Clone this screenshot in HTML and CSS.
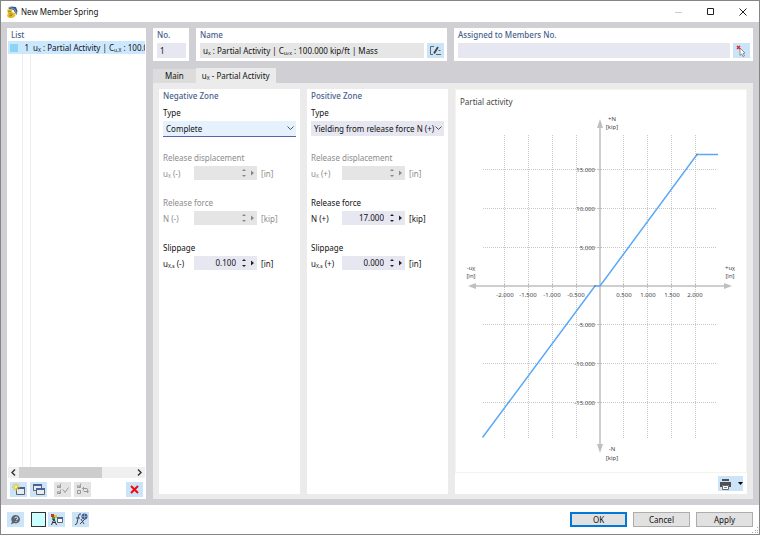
FILE: index.html
```
<!doctype html>
<html lang="en">
<head>
  <meta charset="utf-8">
  <title>New Member Spring</title>
  <link rel="stylesheet" href="styles.css">
</head>
<body>
  <div class="window">
    <header class="titlebar">
      <svg class="app-icon" width="12" height="12" viewBox="0 0 12 12">
        <path d="M2 2l3-1.500 5 .5 1.500 4-1 4-3-5-4-1z" fill="#3c5a7c"/>
        <path d="M4 1.500l5 2 1.500 4" fill="none" stroke="#7f9dbd"/>
        <path d="M1 4l3-1 2 1 0 2 3 1 .5 3-3 2H3L1 10l1-3z" fill="#e6bc2c"/>
        <path d="M2 5l3 .5M3.500 7.500l3 1M3 10l3-.5" stroke="#8f6f10" stroke-width=".8"/>
      </svg>
      <h1>New Member Spring</h1>
      <button class="win-btn" aria-label="Minimize" disabled>
        <svg width="8" height="8"><path d="M0 4.500h7" stroke="#ccc"/></svg>
      </button>
      <button class="win-btn" aria-label="Maximize">
        <svg width="8" height="8"><path d="M.5.5h6v6h-6z" fill="none" stroke="#222"/></svg>
      </button>
      <button class="win-btn" aria-label="Close">
        <svg width="8" height="8"><path d="M.5.5l7 7M7.500.5l-7 7" stroke="#222"/></svg>
      </button>
    </header>

    <main class="body">
      <section class="list-panel">
        <h2>List</h2>
        <ul class="list">
          <li class="selected">
            <span class="swatch"></span>
            <span class="num">1</span>
            <span class="item">u<sub>X</sub> : Partial Activity | C<sub>u,X</sub> : 100.000 kip/ft | Mass</span>
          </li>
        </ul>
        <div class="scrollbar">
          <button aria-label="Scroll left"><svg width="5" height="7"><path d="M4 .5l-3 3 3 3" fill="none" stroke="#333" stroke-width="1.400"/></svg></button>
          <div class="track"><div class="thumb"></div></div>
          <button aria-label="Scroll right"><svg width="5" height="7"><path d="M1 .5l3 3-3 3" fill="none" stroke="#333" stroke-width="1.400"/></svg></button>
        </div>
        <div class="list-tools">
          <button class="tool" aria-label="New">
            <svg width="13" height="13">
              <path d="M4.500 4.500h8v7h-8z" fill="#e8ebf0" stroke="#5b6373"/><path d="M4 5h9" stroke="#4a6299" stroke-width="2"/>
              <path d="M4 0v8M0 4h8M1 1l6 6M7 1L1 7" stroke="#dfc02a"/><circle cx="4" cy="4" r="1.500" fill="#fff35c"/>
            </svg>
          </button>
          <button class="tool" aria-label="Copy">
            <svg width="13" height="13">
              <path d="M1.500 1.500h8v6h-8z" fill="#e8ebf0" stroke="#5b6373"/><path d="M1 2h9" stroke="#4a6299" stroke-width="2"/>
              <path d="M4.500 5.500h8v6h-8z" fill="#e8ebf0" stroke="#5b6373"/><path d="M4 6h9" stroke="#4a6299" stroke-width="2"/>
            </svg>
          </button>
          <button class="tool gap" aria-label="Check all" disabled>
            <svg width="13" height="13" fill="none" stroke="#999">
              <path d="M1.500 2.500v2h3v-2M2 2.500l1.500 1L5 .5M1.500 8.500v2h3v-2M2 8.500l1.500 1L5 6.500M7 6.500l2 3 3.500-5"/>
            </svg>
          </button>
          <button class="tool" aria-label="Invert check" disabled>
            <svg width="13" height="13" fill="none" stroke="#999">
              <path d="M1.500 2.500v2h3v-2M2 2.500l1.500 1L5 .5M1.500 7.500h3v3h-3zM7 5.500h4l1 1.500M8 4L6.500 5.500 8 7M12 8.500H8L7 7.500M11 7l1.500 1.500L11 10"/>
            </svg>
          </button>
          <button class="tool right" aria-label="Delete">
            <svg width="9" height="9"><path d="M1 1l7 7M8 1L1 8" stroke="#f00a14" stroke-width="2"/></svg>
          </button>
        </div>
      </section>

      <div class="content">
        <div class="top-row">
          <section class="panel">
            <label for="no">No.</label>
            <div class="field-row"><input class="box" id="no" type="text" value="1"></div>
          </section>
          <section class="panel">
            <label for="name">Name</label>
            <div class="field-row">
              <input class="box gray" id="name" type="text" readonly value="uₓ : Partial Activity | Cᵤ,ₓ : 100.000 kip/ft | Mass">
              <button class="tool" aria-label="Edit name">
                <svg width="13" height="11" fill="none" stroke="#666">
                  <path d="M5 1.500H1.500v8H4M7 9.500h5M9.500 5.500h2"/><path d="M5 8.500L9 2" stroke="#444" stroke-width="1.800"/>
                </svg>
              </button>
            </div>
          </section>
          <section class="panel">
            <label for="assigned">Assigned to Members No.</label>
            <div class="field-row">
              <input class="box" id="assigned" type="text">
              <button class="tool" aria-label="Select members">
                <svg width="11" height="12">
                  <path d="M4 3l5 5-2 .3 1.500 2.500-1.500.7L5.700 9 4 10.500z" fill="#fff" stroke="#777" stroke-width=".8"/>
                  <path d="M1 1l3 3M4 1L1 4" stroke="#e3202c" stroke-width="1.400"/>
                </svg>
              </button>
            </div>
          </section>
        </div>

        <div class="tabs" role="tablist">
          <button role="tab">Main</button>
          <button role="tab" class="active" aria-selected="true">u<sub>X</sub> - Partial Activity</button>
        </div>

        <div class="tab-page">
          <section class="zone">
            <h2>Negative Zone</h2>
            <div class="group">
              <label for="neg-type">Type</label>
              <div class="select-wrap">
                <select class="focused" id="neg-type"><option>Complete</option></select>
                <svg class="chevron" width="7" height="5"><path d="M.5.5l3 3 3-3" fill="none" stroke="#555"/></svg>
              </div>
            </div>
            <div class="group off">
              <h3>Release displacement</h3>
              <div class="value-row">
                <label for="neg-u">u<sub>X</sub> (-)</label>
                <div class="spin">
                  <input id="neg-u" type="text" disabled>
                  <svg width="15" height="8"><path d="M0 2l2-2 2 2zM0 6l2 2 2-2zM9 1.500l3 2.500-3 2.500z"/></svg>
                </div>
                <span>[in]</span>
              </div>
            </div>
            <div class="group off">
              <h3>Release force</h3>
              <div class="value-row">
                <label for="neg-n">N (-)</label>
                <div class="spin">
                  <input id="neg-n" type="text" disabled>
                  <svg width="15" height="8"><path d="M0 2l2-2 2 2zM0 6l2 2 2-2zM9 1.500l3 2.500-3 2.500z"/></svg>
                </div>
                <span>[kip]</span>
              </div>
            </div>
            <div class="group">
              <h3>Slippage</h3>
              <div class="value-row">
                <label for="neg-s">u<sub>X,s</sub> (-)</label>
                <div class="spin">
                  <input id="neg-s" type="text" value="0.100">
                  <svg width="15" height="8"><path d="M0 2l2-2 2 2zM0 6l2 2 2-2zM9 1.500l3 2.500-3 2.500z"/></svg>
                </div>
                <span>[in]</span>
              </div>
            </div>
          </section>

          <section class="zone">
            <h2>Positive Zone</h2>
            <div class="group">
              <label for="pos-type">Type</label>
              <div class="select-wrap">
                <select id="pos-type"><option>Yielding from release force N (+)</option></select>
                <svg class="chevron" width="7" height="5"><path d="M.5.5l3 3 3-3" fill="none" stroke="#555"/></svg>
              </div>
            </div>
            <div class="group off">
              <h3>Release displacement</h3>
              <div class="value-row">
                <label for="pos-u">u<sub>X</sub> (+)</label>
                <div class="spin">
                  <input id="pos-u" type="text" disabled>
                  <svg width="15" height="8"><path d="M0 2l2-2 2 2zM0 6l2 2 2-2zM9 1.500l3 2.500-3 2.500z"/></svg>
                </div>
                <span>[in]</span>
              </div>
            </div>
            <div class="group">
              <h3>Release force</h3>
              <div class="value-row">
                <label for="pos-n">N (+)</label>
                <div class="spin">
                  <input id="pos-n" type="text" value="17.000">
                  <svg width="15" height="8"><path d="M0 2l2-2 2 2zM0 6l2 2 2-2zM9 1.500l3 2.500-3 2.500z"/></svg>
                </div>
                <span>[kip]</span>
              </div>
            </div>
            <div class="group">
              <h3>Slippage</h3>
              <div class="value-row">
                <label for="pos-s">u<sub>X,s</sub> (+)</label>
                <div class="spin">
                  <input id="pos-s" type="text" value="0.000">
                  <svg width="15" height="8"><path d="M0 2l2-2 2 2zM0 6l2 2 2-2zM9 1.500l3 2.500-3 2.500z"/></svg>
                </div>
                <span>[in]</span>
              </div>
            </div>
          </section>

          <section class="graph">
            <figure>
              <figcaption>Partial activity</figcaption>
              <!-- origin of the plot is 0,0 -->
              <svg class="plot" viewBox="-144 -178 290 364">
                <g class="grid">
                  <path d="M-95.500-151v304M-71.500-151v304M-47.500-151v304M-23.500-151v304M23.500-151v304M47.500-151v304M71.500-151v304M95.500-151v304"/>
                  <path d="M-117-116.500h233M-117-77.500h233M-117-38.500h233M-117 38.500h233M-117 77.500h233M-117 116.500h233"/>
                </g>
                <g class="axis">
                  <path d="M-126 0h252M0-160v320" stroke-width="1.500"/>
                  <path d="M-95.500-2v4M-71.500-2v4M-47.500-2v4M-23.500-2v4M23.500-2v4M47.500-2v4M71.500-2v4M95.500-2v4M-2-116.500h4M-2-77.500h4M-2-38.500h4M-2 38.500h4M-2 77.500h4M-2 116.500h4"/>
                  <path class="head" d="M-132 0l8-3v6zM132 0l-8-3v6zM0-167l-3 9h6zM0 167l-3-9h6z"/>
                </g>
                <path class="curve" d="M-117.500 151.500L-5 0H0L97-131.500h21"/>
                <circle cx="-5" cy="0" r="1" fill="#888"/>
                <circle cx="97" cy="-131.500" r="1" fill="#888"/>
                <g class="x-labels">
                  <text x="-95" y="11">-2.000</text>
                  <text x="-72" y="11">-1.500</text>
                  <text x="-48" y="11">-1.000</text>
                  <text x="-24" y="11">-0.500</text>
                  <text x="24" y="11">0.500</text>
                  <text x="48" y="11">1.000</text>
                  <text x="72" y="11">1.500</text>
                  <text x="95" y="11">2.000</text>
                  <text x="12" y="-165">+N</text>
                  <text x="12" y="-157">[kip]</text>
                  <text x="12" y="165">-N</text>
                  <text x="12" y="174">[kip]</text>
                  <text x="-129" y="-16">-u<tspan class="sub" dy="1">X</tspan></text>
                  <text x="-129" y="-8">[in]</text>
                  <text x="130" y="-16">+u<tspan class="sub" dy="1">X</tspan></text>
                  <text x="130" y="-8">[in]</text>
                </g>
                <g class="y-labels">
                  <text x="-5" y="-114">15.000</text>
                  <text x="-5" y="-75">10.000</text>
                  <text x="-5" y="-36">5.000</text>
                  <text x="-5" y="41">-5.000</text>
                  <text x="-5" y="80">-10.000</text>
                  <text x="-5" y="119">-15.000</text>
                </g>
              </svg>
            </figure>
            <div class="graph-tools">
              <button class="tool print" aria-label="Print">
                <svg width="12" height="12">
                  <path d="M3 1h7v2H3zM1 4h11v5h-2V7H3v2H1z" fill="#4d5157"/>
                  <path d="M3.500 7.500h6v4h-6z" fill="#fff" stroke="#666"/><path d="M5 9.500h3" stroke="#888"/>
                </svg>
                <svg width="5" height="3"><path d="M0 0h5L2.500 3z"/></svg>
              </button>
            </div>
          </section>
        </div>
      </div>
    </main>

    <footer class="footer">
      <button class="tool" aria-label="Help">
        <svg width="11" height="11">
          <path d="M6 1a4.200 4.200 0 1 1-2 8L1 10.500l1-3A4.200 4.200 0 0 1 6 1z" fill="#5b646e"/>
          <path d="M4.500 4Q6 2 7.500 3.500T6 6M6 7v1" fill="none" stroke="#dfe8f0"/>
        </svg>
      </button>
      <button class="color" aria-label="Color"></button>
      <button class="tool" aria-label="Display properties">
        <svg width="13" height="13">
          <path d="M1 1h3v3H1z" fill="#e22d2d"/><path d="M4 2h3v3H4z" fill="#e2c21e"/><path d="M2 4h3v3H2z" fill="#2ba24a"/>
          <path d="M4 6l-2.500 6M4 6l2.500 6M2 9.500h4" stroke="#333" fill="none"/>
          <path d="M7.500 4.500h5v5h-5z" fill="#fff" stroke="#5b6373"/><path d="M7 5h6" stroke="#4a6299" stroke-width="2"/>
        </svg>
      </button>
      <button class="tool formula" aria-label="Formula">
        <svg width="14" height="13">
          <path d="M7 1Q5 0 4.500 3L3 10Q2.500 12 1 11.500M2 5h4M7 6l3 5M11 6l-5 5" fill="none" stroke="#3f4650"/>
          <circle cx="10.500" cy="3.500" r="3" fill="#44598c"/><path d="M8 3.500h5M10.500 1v5" stroke="#a9b8da" stroke-width=".7"/>
        </svg>
      </button>
      <div class="actions">
        <button class="push default">OK</button>
        <button class="push">Cancel</button>
        <button class="push">Apply</button>
      </div>
      <svg class="grip" width="7" height="7"><path d="M5 0h1v1H5zM3 3h1v1H3zM5 3h1v1H5zM0 5h1v1H0zM3 5h1v1H3zM5 5h1v1H5z" fill="#aaa"/></svg>
    </footer>
  </div>
</body>
</html>
```
FILE: styles.css
```
* {
  box-sizing: border-box;
}
html, body {
  margin: 0;
  height: 100%;
}
body, button, input, select {
  font-family: "Noto Sans", "Open Sans", sans-serif;
  font-size: 8px;
  line-height: 12px;
  color: #111;
}
h1, h2, h3, ul, figure {
  margin: 0;
  padding: 0;
  font-size: 8px;
  font-weight: normal;
}
button, input, select {
  margin: 0;
  padding: 0;
  border: none;
  border-radius: 0;
}
svg {
  display: block;
  flex: none;
}
sub {
  font-size: 5px;
  line-height: 1px;
  vertical-align: -1px;
}
.window {
  display: flex;
  flex-direction: column;
  height: 100%;
  border: 1px solid #858588;
  background: #fff;
}
.titlebar {
  flex: none;
  display: flex;
  align-items: center;
  height: 21px;
  padding-left: 5px;
}
.titlebar h1 {
  flex: auto;
  margin-left: 3px;
}
.win-btn {
  display: flex;
  justify-content: center;
  align-items: center;
  width: 32px;
  height: 20px;
  background: transparent;
}

/* main area */
.body {
  flex: auto;
  display: flex;
  gap: 7px;
  min-height: 0;
  padding: 6px;
  background: #d0cfd4;
}
.list-panel {
  flex: none;
  display: flex;
  flex-direction: column;
  width: 139px;
  padding: 0 1px;
  background: #fff;
}
.list-panel h2 {
  padding-left: 3px;
}
.list-panel h2, .panel label, .zone h2 {
  line-height: 13px;
  font-weight: 500;
  color: #485f8c;
}
.list {
  flex: auto;
  list-style: none;
  background: linear-gradient(#eee, #eee) 14px 0 / 1px 100% no-repeat,
    linear-gradient(#eee, #eee) 22px 0 / 1px 100% no-repeat;
}
.list li {
  display: flex;
  align-items: center;
  height: 13px;
}
.list .selected {
  background: #cce8ff;
}
.swatch {
  flex: none;
  width: 8px;
  height: 8px;
  margin-left: 2px;
  background: #8ad4f4;
}
.num {
  flex: none;
  width: 11px;
  text-align: right;
}
.item {
  margin-left: 4px;
  overflow: hidden;
  white-space: nowrap;
}
.scrollbar {
  display: flex;
  height: 11px;
  background: #f0f0f0;
}
.scrollbar button {
  display: flex;
  justify-content: center;
  align-items: center;
  width: 11px;
  background: transparent;
}
.track {
  flex: auto;
}
.thumb {
  width: 72%;
  height: 100%;
  background: #cdcdcd;
}
.list-tools {
  display: flex;
  gap: 3px;
  padding: 4px 2px 2px;
}
.tool {
  flex: none;
  display: flex;
  justify-content: center;
  align-items: center;
  width: 17px;
  height: 15px;
  background: #cbe4f7;
}
.tool:disabled {
  background: #e4e4e4;
}
.tool.gap {
  margin-left: 4px;
}
.tool.right {
  margin-left: auto;
}
.content {
  flex: auto;
  display: flex;
  flex-direction: column;
  min-width: 0;
}
.top-row {
  display: grid;
  grid-template-columns: 36px 251px 1fr;
  gap: 7px;
}
.panel {
  padding: 0 3px 3px 4px;
  background: #fff;
}
.panel label {
  display: block;
}
.field-row {
  display: flex;
  gap: 3px;
  height: 15px;
  margin-top: 2px;
}
.box {
  flex: auto;
  width: 0;
  padding: 0 3px;
  background: #e7e7f2;
}
.box.gray {
  background: #e6e6e6;
}

/* tabs */
.tabs {
  display: flex;
  align-items: flex-end;
  height: 15px;
  margin-top: 7px;
}
.tabs button {
  height: 14px;
  padding: 0 6px;
  background: #dcdcdc;
}
.tabs button:first-child {
  padding: 0 12px;
}
.tabs .active {
  height: 15px;
  background: #ebebeb;
}
.tab-page {
  flex: auto;
  display: grid;
  grid-template-columns: 141px 141px 1fr;
  gap: 7px;
  padding: 6px 6px 5px;
  background: #ebebeb;
}
.zone {
  padding: 0 4px;
  background: #fff;
}
.zone h2 {
  margin-bottom: 5px;
}
.group {
  margin-bottom: 16px;
}
.group > label, .group h3 {
  display: block;
  margin-bottom: 2px;
}
.select-wrap {
  position: relative;
}
select {
  display: block;
  appearance: none;
  width: 100%;
  height: 15px;
  padding-left: 3px;
  background: #e7e7f2;
}
select.focused {
  background: #e5f2fd;
  box-shadow: 0 1px #5d62a8;
}
.chevron {
  position: absolute;
  right: 2px;
  top: 5px;
  pointer-events: none;
}
.value-row {
  display: flex;
  height: 15px;
  line-height: 15px;
}
.value-row label {
  width: 31px;
}
.value-row span {
  margin-left: 4px;
}
.spin {
  display: flex;
  align-items: center;
  width: 63px;
  height: 14px;
  background: #e7e7f2;
}
.spin input {
  flex: auto;
  width: 0;
  padding-right: 6px;
  text-align: right;
  background: transparent;
}
.spin svg {
  fill: #222;
}
.off {
  color: #8c8c8c;
}
.off h3, .off label {
  color: #8c8c8c;
}
.off .spin {
  background: #e5e5e5;
}
.off .spin svg {
  fill: #888;
}

/* graph */
.graph {
  display: flex;
  flex-direction: column;
  background: #fff;
}
figure {
  flex: auto;
  border: 1px solid #f5f4ea;
}
figcaption {
  padding: 6px 4px 0;
  color: #444;
}
.plot {
  width: 100%;
}
.plot text {
  font-size: 6px;
  fill: #444;
}
.plot .sub {
  font-size: 5px;
}
.grid path {
  fill: none;
  stroke: #c8c8c8;
  stroke-dasharray: 1 1;
}
.axis path {
  fill: none;
  stroke: #bfbfbf;
}
.axis .head {
  fill: #bfbfbf;
  stroke: none;
}
.curve {
  fill: none;
  stroke: #5aa9f8;
  stroke-width: 1.5;
}
.x-labels {
  text-anchor: middle;
}
.y-labels {
  text-anchor: end;
}
.graph-tools {
  display: flex;
  justify-content: flex-end;
  padding: 3px 4px;
}
.print {
  gap: 7px;
  width: 25px;
}

/* footer */
.footer {
  flex: none;
  position: relative;
  display: flex;
  align-items: center;
  height: 29px;
  padding: 0 6px;
}
.color {
  width: 15px;
  height: 15px;
  margin: 0 2px 0 7px;
  border: 1px solid #333;
  background: #ccffff;
}
.formula {
  margin-left: 7px;
}
.actions {
  display: flex;
  gap: 6px;
  margin-left: auto;
}
.push {
  width: 57px;
  height: 15px;
  border: 1px solid #adadad;
  background: #e1e1e1;
}
.push.default {
  border: 1px solid #0078d7;
  outline: 1px solid #0078d7;
  outline-offset: -2px;
}
.grip {
  position: absolute;
  right: 0;
  bottom: 0;
}
```
